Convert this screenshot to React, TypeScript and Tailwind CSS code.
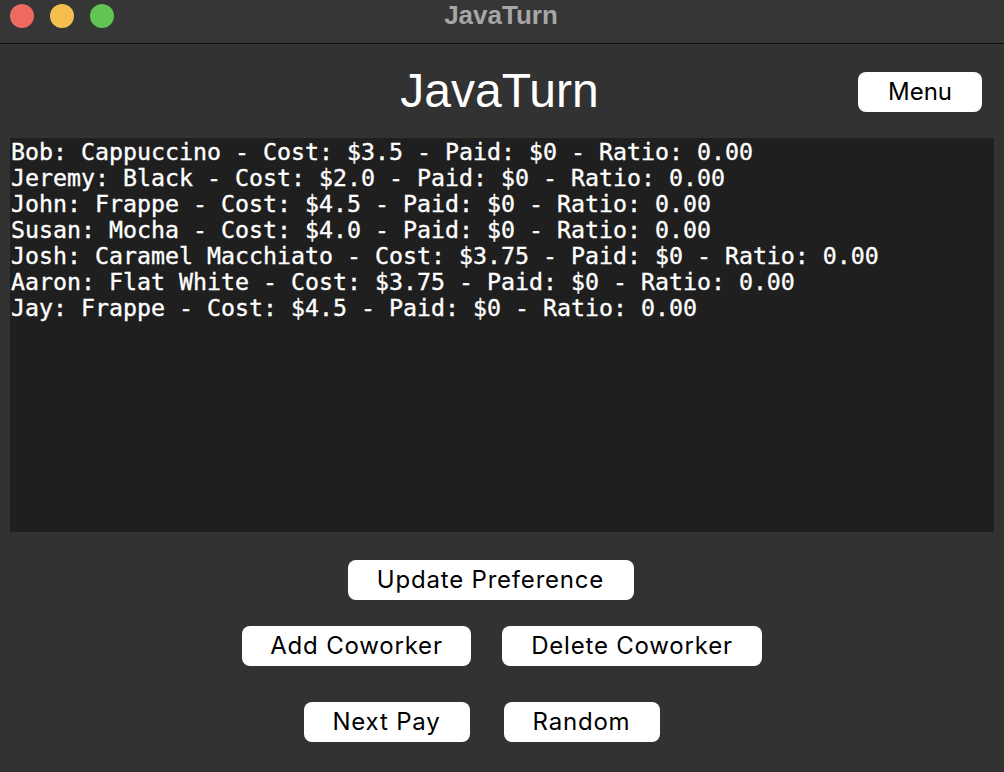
import React from "react";

const lines = [
  "Bob: Cappuccino - Cost: $3.5 - Paid: $0 - Ratio: 0.00",
  "Jeremy: Black - Cost: $2.0 - Paid: $0 - Ratio: 0.00",
  "John: Frappe - Cost: $4.5 - Paid: $0 - Ratio: 0.00",
  "Susan: Mocha - Cost: $4.0 - Paid: $0 - Ratio: 0.00",
  "Josh: Caramel Macchiato - Cost: $3.75 - Paid: $0 - Ratio: 0.00",
  "Aaron: Flat White - Cost: $3.75 - Paid: $0 - Ratio: 0.00",
  "Jay: Frappe - Cost: $4.5 - Paid: $0 - Ratio: 0.00",
];

function Btn({ label, w, tight }: { label: string; w: string; tight?: boolean }) {
  return (
    <button
      className={`${w} h-[40px] rounded-[8px] bg-white text-black text-[24px] leading-[40px] font-['Inter',sans-serif] flex items-center justify-center ${
        tight ? "tracking-[0px]" : "tracking-[0.8px]"
      }`}
    >
      {label}
    </button>
  );
}

export default function App() {
  return (
    <div className="w-[1004px] h-[772px] bg-[#323232] flex flex-col overflow-hidden">
      {/* title bar */}
      <div className="h-[44px] bg-[#363636] border-b border-[#0e0e0e] grid grid-cols-[1fr_auto_1fr] items-start">
        <div className="flex gap-[16px] pl-[10px] pt-[4px]">
          <span className="w-[24px] h-[24px] rounded-full bg-[#ee6a5f]" />
          <span className="w-[24px] h-[24px] rounded-full bg-[#f5bf4f]" />
          <span className="w-[24px] h-[24px] rounded-full bg-[#61c554]" />
        </div>
        <div className="text-[26px] leading-[30px] font-bold text-[#a6a6a6] font-['Liberation_Sans',Arial,sans-serif] pr-[2px]">
          JavaTurn
        </div>
        <div />
      </div>

      {/* heading row */}
      <div className="grid grid-cols-[1fr_auto_1fr] items-center pt-[28px] h-[68px]">
        <div />
        <h1 className="text-[48px] leading-[40px] text-white font-['Liberation_Sans',Arial,sans-serif] -translate-y-[1px] pr-[5px]">
          JavaTurn
        </h1>
        <div className="flex justify-end pr-[22px]">
          <Btn label="Menu" w="w-[124px]" tight />
        </div>
      </div>

      {/* text area */}
      <div className="mt-[26px] mx-[10px] h-[394px] bg-[#1f1f1f] pt-[1px] pl-[1px] font-['DejaVu_Sans_Mono',monospace] text-[23.25px] leading-[26px] text-white whitespace-pre [-webkit-text-stroke:0.35px_white]">
        {lines.map((l) => (
          <div key={l}>{l}</div>
        ))}
      </div>

      {/* buttons */}
      <div className="mt-[28px] flex justify-center pr-[23px]">
        <Btn label="Update Preference" w="w-[286px]" />
      </div>
      <div className="mt-[26px] flex justify-center gap-[31px]">
        <Btn label="Add Coworker" w="w-[229px]" />
        <Btn label="Delete Coworker" w="w-[260px]" />
      </div>
      <div className="mt-[36px] flex justify-center gap-[34px] pr-[41px]">
        <Btn label="Next Pay" w="w-[166px]" />
        <Btn label="Random" w="w-[156px]" />
      </div>
    </div>
  );
}
